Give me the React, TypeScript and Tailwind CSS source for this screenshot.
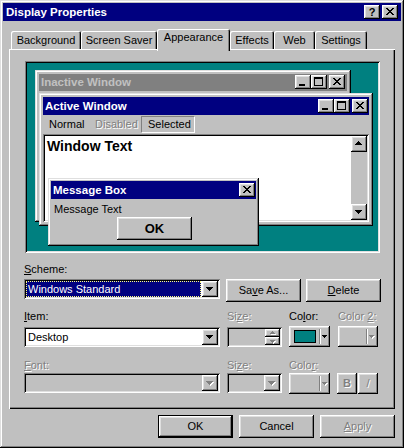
import React from 'react';

const RAISED = 'shadow-[inset_-1px_-1px_0_#000,inset_1px_1px_0_#fff,inset_-2px_-2px_0_#808080,inset_2px_2px_0_#dfdfdf]';
const WIN = 'shadow-[inset_-1px_-1px_0_#000,inset_1px_1px_0_#dfdfdf,inset_-2px_-2px_0_#808080,inset_2px_2px_0_#fff]';
const SUNKEN = 'shadow-[inset_1px_1px_0_#808080,inset_-1px_-1px_0_#fff,inset_2px_2px_0_#000,inset_-2px_-2px_0_#dfdfdf]';
const PANEL = 'shadow-[inset_1px_1px_0_#fff,inset_-1px_-1px_0_#000,inset_-2px_-2px_0_#808080]';
const TAB = 'shadow-[inset_1px_1px_0_#fff,inset_-1px_0_0_#000,inset_-2px_0_0_#808080]';
const DIS = 'text-[#808080] [text-shadow:1px_1px_0_#fff]';
const DIS_ICON = '[filter:drop-shadow(1px_1px_0_#fff)]';

// pixel glyphs, '#' = ink
const CLOSE = ['##....##', '.##..##.', '..####..', '...##...', '..####..', '.##..##.', '##....##'];
const MIN = ['######', '######'];
const MAX = [
  '#########',
  '#########',
  '#.......#',
  '#.......#',
  '#.......#',
  '#.......#',
  '#.......#',
  '#.......#',
  '#########',
];
const DOWN = ['#######', '.#####.', '..###..', '...#...'];
const UP = [...DOWN].reverse();
const SMALL_DOWN = ['#####', '.###.', '..#..'];
const SMALL_UP = [...SMALL_DOWN].reverse();

const Pix = ({ rows, color = '#000', className = '' }: { rows: string[]; color?: string; className?: string }) => (
  <svg width={rows[0].length} height={rows.length} fill={color} shapeRendering="crispEdges" className={`block ${className}`}>
    {rows.flatMap((r, y) =>
      [...r].map((c, x) => (c === '#' ? <rect key={`${x}-${y}`} x={x} y={y} width={1} height={1} /> : null))
    )}
  </svg>
);

const Box = ({ className = '', children }: { className?: string; children?: React.ReactNode }) => (
  <div className={`bg-[#c0c0c0] ${RAISED} ${className}`}>{children}</div>
);

const CapClose = ({ className = '' }: { className?: string }) => (
  <Box className={`h-[14px] w-[16px] pl-[4px] pt-[3px] ${className}`}>
    <Pix rows={CLOSE} />
  </Box>
);
const CapMin = () => (
  <Box className="h-[14px] w-[16px] pl-[4px] pt-[9px]">
    <Pix rows={MIN} />
  </Box>
);
const CapMax = () => (
  <Box className="h-[14px] w-[16px] pl-[3px] pt-[2px]">
    <Pix rows={MAX} />
  </Box>
);

const DropBtn = ({ disabled = false }: { disabled?: boolean }) => (
  <Box className="h-[16px] w-[16px] shrink-0 pl-[4px] pt-[6px]">
    <Pix rows={DOWN} color={disabled ? '#808080' : '#000'} className={disabled ? DIS_ICON : ''} />
  </Box>
);

const Combo = ({ className = '', disabled = false, children }: { className?: string; disabled?: boolean; children?: React.ReactNode }) => (
  <div className={`flex h-[20px] p-[2px] ${SUNKEN} ${disabled ? 'bg-[#c0c0c0]' : 'bg-white'} ${className}`}>
    <div className="flex min-w-0 flex-1 items-center">{children}</div>
    <DropBtn disabled={disabled} />
  </div>
);

const Btn = ({ className = '', children }: { className?: string; children?: React.ReactNode }) => (
  <Box className={`flex h-[23px] w-[75px] items-center justify-center ${className}`}>{children}</Box>
);

const Label = ({ disabled = false, children }: { disabled?: boolean; children: React.ReactNode }) => (
  <div className={`h-[13px] leading-[13px] ${disabled ? DIS : ''}`}>{children}</div>
);

const TABS = [
  { label: 'Background', w: 'w-[70px]' },
  { label: 'Screen Saver', w: 'w-[76px]' },
  { label: 'Appearance', w: 'w-[73px]', active: true },
  { label: 'Effects', w: 'w-[44px]' },
  { label: 'Web', w: 'w-[41px]' },
  { label: 'Settings', w: 'w-[52px]' },
];

const Preview = () => (
  <div className={`relative ml-[1px] h-[192px] w-[355px] bg-[#008080] ${SUNKEN}`}>
    {/* inactive window */}
    <div className={`absolute left-[10px] top-[9px] h-[152px] w-[316px] bg-[#c0c0c0] p-[4px] ${WIN}`}>
      <div className="flex h-[17px] justify-between bg-[#808080] pl-[2px] pr-[2px]">
        <span className="self-center text-[11.5px] font-bold text-[#c0c0c0]">Inactive Window</span>
        <div className="mt-[1px] flex">
          <CapMin />
          <CapMax />
          <CapClose className="ml-[2px]" />
        </div>
      </div>
    </div>

    {/* active window */}
    <div className={`absolute left-[14px] top-[32px] flex h-[133px] w-[334px] flex-col bg-[#c0c0c0] p-[4px] ${WIN}`}>
      <div className="flex h-[18px] shrink-0 justify-between bg-[#000080] pl-[2px] pr-[1px]">
        <span className="self-center text-[11.5px] font-bold text-white">Active Window</span>
        <div className="mt-[2px] flex">
          <CapMin />
          <CapMax />
          <CapClose className="ml-[2px]" />
        </div>
      </div>
      <div className="flex h-[19px] shrink-0 items-center pl-[6px]">
        <span className="w-[46px]">Normal</span>
        <span className={`w-[46px] ${DIS}`}>Disabled</span>
        <span className="flex h-[17px] w-[54px] items-center border border-b-white border-l-[#808080] border-r-white border-t-[#808080] pl-[6px]">
          Selected
        </span>
      </div>
      <div className={`flex h-[88px] shrink-0 bg-white p-[2px] ${SUNKEN}`}>
        <div className="flex-1 pl-[2px] pt-[2px] text-[14px] font-bold leading-[16px]">Window Text</div>
        <div className="flex w-[16px] flex-col justify-between bg-[#c0c0c0]">
          <Box className="h-[16px] w-[16px] pl-[4px] pt-[5px]">
            <Pix rows={UP} />
          </Box>
          <Box className="h-[16px] w-[16px] pl-[4px] pt-[6px]">
            <Pix rows={DOWN} />
          </Box>
        </div>
      </div>
    </div>

    {/* message box */}
    <div className={`absolute left-[23px] top-[117px] h-[68px] w-[211px] bg-[#c0c0c0] p-[3px] ${WIN}`}>
      <div className="flex h-[18px] justify-between bg-[#000080] pl-[2px] pr-[1px]">
        <span className="self-center text-[11.5px] font-bold text-white">Message Box</span>
        <CapClose className="mt-[2px]" />
      </div>
      <div className="pl-[3px] pt-[4px]">Message Text</div>
      <Btn className="ml-[66px] mt-[1px] w-[72px] text-[13px] font-bold">OK</Btn>
    </div>
  </div>
);

export default function App() {
  return (
    <div
      className={`h-[448px] w-[404px] bg-[#c0c0c0] p-[3px] text-[11px] leading-[13px] text-black [font-family:'Liberation_Sans',Arial,sans-serif] ${WIN}`}
    >
      {/* title bar */}
      <div className="flex h-[18px] justify-between bg-[#000080] pl-[3px] pr-[3px]">
        <span className="self-center text-[11.5px] font-bold text-white">Display Properties</span>
        <div className="mt-[2px] flex gap-[2px]">
          <Box className="flex h-[14px] w-[16px] items-center justify-center text-[11px] font-bold leading-none">?</Box>
          <CapClose />
        </div>
      </div>

      {/* tabs */}
      <div className="mt-[8px] flex h-[20px] items-end pl-[8px]">
        {TABS.map((t) =>
          t.active ? (
            <div
              key={t.label}
              className={`relative z-10 -mb-[2px] flex h-[22px] justify-center rounded-t-[2px] bg-[#c0c0c0] pt-[2px] ${t.w} ${TAB}`}
            >
              {t.label}
            </div>
          ) : (
            <div key={t.label} className={`flex h-[18px] items-center justify-center rounded-t-[2px] bg-[#c0c0c0] ${t.w} ${TAB}`}>
              {t.label}
            </div>
          )
        )}
      </div>

      {/* tab page */}
      <div className={`mx-[6px] h-[360px] pl-[15px] pt-[12px] ${PANEL}`}>
        <Preview />

        <div className="mt-[10px]">
          <Label>
            <u>S</u>cheme:
          </Label>
        </div>
        <div className="mt-[3px] flex items-start">
          <Combo className="w-[196px]">
            <div className="mr-[1px] flex h-full flex-1 items-center border border-dotted border-[#ffff80] bg-[#000080] pl-[1px] text-white">
              Windows Standard
            </div>
          </Combo>
          <Btn className="ml-[6px]">
            Sa<u>v</u>e As...
          </Btn>
          <Btn className="ml-[5px]">
            <u>D</u>elete
          </Btn>
        </div>

        {/* item row */}
        <div className="mt-[8px] flex items-start">
          <div className="w-[196px]">
            <Label>
              <u>I</u>tem:
            </Label>
            <Combo className="mt-[4px]">
              <span className="pl-[2px]">Desktop</span>
            </Combo>
          </div>
          <div className="ml-[7px] w-[55px]">
            <Label disabled>
              Si<u>z</u>e:
            </Label>
            <div className={`mt-[4px] flex h-[20px] bg-[#c0c0c0] p-[2px] ${SUNKEN}`}>
              <div className="flex-1" />
              <div className="flex w-[15px] flex-col">
                <Box className="h-[8px] pl-[5px] pt-[2px]">
                  <Pix rows={SMALL_UP} color="#808080" className={DIS_ICON} />
                </Box>
                <Box className="h-[8px] pl-[5px] pt-[3px]">
                  <Pix rows={SMALL_DOWN} color="#808080" className={DIS_ICON} />
                </Box>
              </div>
            </div>
          </div>
          <div className="ml-[7px] w-[41px]">
            <Label>
              Co<u>l</u>or:
            </Label>
            <Box className="mt-[3px] flex h-[21px] items-start pl-[5px] pt-[4px]">
              <div className="h-[13px] w-[22px] border border-black bg-[#008080]" />
              <div className="-mt-[1px] ml-[3px] h-[15px] w-[2px] border-l border-r border-l-[#808080] border-r-white" />
              <Pix rows={SMALL_DOWN} className="ml-[1px] mt-[5px]" />
            </Box>
          </div>
          <div className="ml-[8px] w-[40px]">
            <Label disabled>
              Color <u>2</u>:
            </Label>
            <Box className="mt-[3px] flex h-[21px] items-start pl-[28px] pt-[3px]">
              <div className="h-[15px] w-[2px] border-l border-r border-l-[#808080] border-r-white" />
              <Pix rows={SMALL_DOWN} color="#808080" className={`ml-[1px] mt-[6px] ${DIS_ICON}`} />
            </Box>
          </div>
        </div>

        {/* font row */}
        <div className="mt-[12px] flex items-start">
          <div className="w-[196px]">
            <Label disabled>
              <u>F</u>ont:
            </Label>
            <Combo disabled className="mt-[1px]" />
          </div>
          <div className="ml-[7px] w-[55px]">
            <Label disabled>
              Si<u>z</u>e:
            </Label>
            <Combo disabled className="mt-[1px]" />
          </div>
          <div className="ml-[7px] w-[41px]">
            <Label disabled>
              Colo<u>r</u>:
            </Label>
            <Box className="mt-[1px] flex h-[21px] items-start pl-[30px] pt-[3px]">
              <div className="h-[15px] w-[2px] border-l border-r border-l-[#808080] border-r-white" />
              <Pix rows={SMALL_DOWN} color="#808080" className={`ml-[1px] mt-[6px] ${DIS_ICON}`} />
            </Box>
          </div>
          <div className="ml-[7px] mt-[14px] flex gap-[1px]">
            <Box className={`flex h-[21px] w-[20px] items-center justify-center font-bold ${DIS}`}>B</Box>
            <Box className={`flex h-[21px] w-[20px] items-center justify-center ${DIS}`}>/</Box>
          </div>
        </div>
      </div>

      {/* dialog buttons */}
      <div className="mt-[6px] flex justify-end gap-[6px] pr-[6px]">
        <div className="h-[23px] w-[75px] border border-black">
          <Box className="flex h-full w-full items-center justify-center">OK</Box>
        </div>
        <Btn>Cancel</Btn>
        <Btn className={DIS}>
          <u>A</u>pply
        </Btn>
      </div>
    </div>
  );
}
